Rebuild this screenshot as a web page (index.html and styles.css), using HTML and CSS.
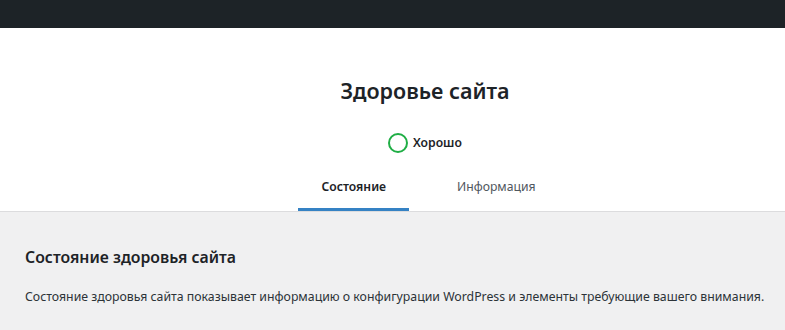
FILE: index.html
```html
<!DOCTYPE html>
<html lang="ru">
<head>
<meta charset="utf-8">
<title>Здоровье сайта</title>
<link rel="stylesheet" href="styles.css">
</head>
<body>
<div class="adminbar"></div>
<div class="header">
  <div class="title-section">
    <h1 class="title">Здоровье сайта</h1>
  </div>
  <div class="progress-wrapper">
    <span class="progress"></span>
    <span class="progress-label">Хорошо</span>
  </div>
  <nav class="tabs">
    <a class="tab active" href="#">Состояние</a>
    <a class="tab" href="#">Информация</a>
  </nav>
</div>
<div class="body">
  <h2 class="section-title">Состояние здоровья сайта</h2>
  <p class="section-text">Состояние здоровья сайта показывает информацию о конфигурации WordPress и элементы требующие вашего внимания.</p>
</div>
</body>
</html>
```
FILE: styles.css
```css
* { box-sizing: border-box; }
html, body { margin: 0; padding: 0; }
body {
  background: #f0f0f1;
  color: #1d2327;
  font-family: "Noto Sans", "Open Sans", sans-serif;
  font-size: 12.2px;
}
.adminbar { height: 28px; background: #1d2327; }
.header {
  background: #fff;
  border-bottom: 1px solid #dcdcde;
  text-align: center;
  padding-left: 65px;
}
.title-section {
  display: flex;
  justify-content: center;
  padding-top: 48px;
}
.title {
  margin: 0;
  font-size: 21.5px;
  font-weight: 600;
  line-height: 30px;
}
.progress-wrapper {
  display: flex;
  justify-content: center;
  align-items: center;
  margin: 27px 0 14px;
}
.progress {
  display: inline-block;
  width: 20px;
  height: 20px;
  border-radius: 50%;
  border: 2px solid #1fae45;
}
.progress-label {
  font-weight: 600;
  line-height: 20px;
  margin-left: 5px;
}
.tabs {
  display: inline-grid;
  grid-template-columns: 1fr 1fr;
}
.tab {
  display: block;
  color: #50575e;
  text-decoration: none;
  padding: 10px 16px 14px;
  margin: 0 16px;
  line-height: 20px;
}
.tab.active {
  color: #1d2327;
  font-weight: 600;
  box-shadow: inset 0 -3px #3582c4;
}
.body { padding: 33px 8px 0 25px; }
.section-title {
  margin: 0 0 18px;
  font-size: 15.8px;
  font-weight: 600;
  line-height: 24px;
}
.section-text {
  margin: 0;
  font-size: 12.3px;
  line-height: 20px;
  color: #2c3338;
}
```
